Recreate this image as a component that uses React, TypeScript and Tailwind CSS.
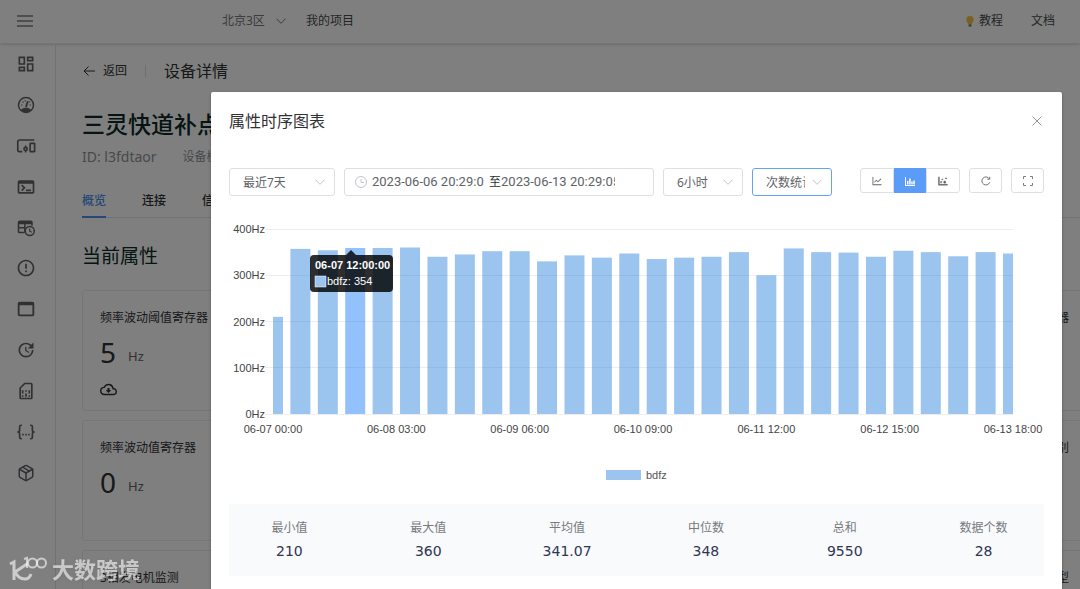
import React from "react";
import {
  MdOutlineDashboard,
  MdOutlineTerminal,
  MdErrorOutline,
  MdWebAsset,
  MdUpdate,
  MdOutlineSimCard,
  MdOutlineCloudDownload,
} from "react-icons/md";
import {
  AiOutlineLineChart,
  AiOutlineDotChart,
} from "react-icons/ai";
import { Package } from "lucide-react";

const GaugeIcon = () => (
  <svg viewBox="0 0 24 24" className="size-[18px]" fill="none" stroke="currentColor" strokeWidth="2">
    <circle cx="12" cy="12" r="10" />
    <path d="M5 18.500c2-2.300 4.400-3 7-3s5 .7 7 3c-2 2-4.400 3-7 3s-5-1-7-3z" fill="currentColor" stroke="none" />
    <path d="M12 14.500L14.500 7" strokeWidth="2.400" />
    <path d="M5.500 12h1.800M16.800 12h1.800M7.500 7.500l1.200 1.200M11 5.500v1.700M17 7.200l-.8 1" strokeWidth="1.600" />
  </svg>
);

const DevicesIcon = () => (
  <svg viewBox="0 0 26 24" className="h-[18px] w-[20px]" fill="none" stroke="currentColor" strokeWidth="2.200">
    <path d="M24 4H4.500Q2 4 2 6.500V17q0 2.500 2 2.500h4" />
    <rect x="18.500" y="8.500" width="6" height="11" rx="0.500" />
    <circle cx="12.500" cy="16" r="2.200" />
    <path d="M11.500 12.500h2M11.500 19.500h2" />
  </svg>
);

const TableClockIcon = () => (
  <svg viewBox="0 0 24 24" className="size-[18px]" fill="none" stroke="currentColor" strokeWidth="2">
    <path d="M10 18H3.500Q2 18 2 16.500V4.500Q2 3 3.500 3h15Q20 3 20 4.500V9M2 11.500h9M10.500 6v12" />
    <path d="M2 3h18v4H2z" fill="currentColor" stroke="none" />
    <circle cx="17" cy="16" r="6" />
    <path d="M17 12.500V16.300l2.600 1.500" strokeWidth="1.600" />
  </svg>
);

const BracesIcon = () => (
  <svg viewBox="0 0 26 24" className="h-[18px] w-[20px]" fill="none" stroke="currentColor" strokeWidth="2.200">
    <path d="M7.500 3H6.500Q4.500 3 4.500 5V9.500Q4.500 12 1.500 12Q4.500 12 4.500 14.500V19Q4.500 21 6.500 21H7.500" />
    <path d="M18.500 3H19.500Q21.500 3 21.500 5V9.500Q21.500 12 24.500 12Q21.500 12 21.500 14.500V19Q21.500 21 19.500 21H18.500" />
    <path d="M8 15.500h2M12 15.500h2M16 15.500h2" />
  </svg>
);

const BarsIcon = () => (
  <svg viewBox="0 0 10 10" className="size-[10px]" fill="currentColor">
    <path d="M0 1h1v8h9v1H0zM2 5h1.500v3.500H2zM4.200 2.500h1.500v6H4.200zM6.300 5.500h1.400v3H6.300zM8.300 4.500h1.500v4H8.300z" />
  </svg>
);

const Chevron = ({ className = "" }: { className?: string }) => (
  <svg viewBox="0 0 10 10" className={`size-[10px] ${className}`} fill="none" stroke="currentColor">
    <path d="M0.500 2.700L5 7.300L9.500 2.700" />
  </svg>
);

const NAV = [
  { label: "仪表盘", icon: <MdOutlineDashboard size={20} /> },
  { label: "监控", icon: <GaugeIcon /> },
  { label: "设备", icon: <DevicesIcon /> },
  { label: "终端", icon: <MdOutlineTerminal size={20} /> },
  { label: "定时", icon: <TableClockIcon /> },
  { label: "告警", icon: <MdErrorOutline size={20} /> },
  { label: "应用", icon: <MdWebAsset size={22} /> },
  { label: "更新", icon: <MdUpdate size={20} /> },
  { label: "流量卡", icon: <MdOutlineSimCard size={20} /> },
  { label: "接口", icon: <BracesIcon /> },
  { label: "产品", icon: <Package size={18} /> },
];

interface CardData {
  title: string;
  value?: string;
  unit?: string;
  cloud?: boolean;
}

const CARDS: CardData[] = [
  { title: "频率波动阈值寄存器", value: "5", unit: "Hz", cloud: true },
  { title: "电压波动寄存器" },
  { title: "电流波动寄存器" },
  { title: "电压波动阈值寄存器" },
  { title: "频率波动值寄存器", value: "0", unit: "Hz" },
  { title: "功率寄存器" },
  { title: "相位寄存器" },
  { title: "市电油机供电类识别" },
  { title: "3相发电机监测" },
  { title: "单相监测" },
  { title: "发电机状态" },
  { title: "发电机组设备的类型" },
];

const VALUES = [
  210, 357, 354, 359, 359, 360, 340, 345, 352, 352, 330, 343, 338, 347, 335,
  338, 340, 350, 300, 358, 350, 349, 340, 353, 350, 341, 350, 347,
];

const TICKS = [
  "06-07 00:00",
  "06-08 03:00",
  "06-09 06:00",
  "06-10 09:00",
  "06-11 12:00",
  "06-12 15:00",
  "06-13 18:00",
];

const STATS = [
  ["最小值", "210"],
  ["最大值", "360"],
  ["平均值", "341.07"],
  ["中位数", "348"],
  ["总和", "9550"],
  ["数据个数", "28"],
];

const LEFT = 44;
const RIGHT = 784;
const BASE = 200;
const STEP = (RIGHT - LEFT) / (VALUES.length - 1);
const toY = (v: number) => BASE - (v * 185) / 400;

const Chart: React.FC = () => (
  <svg viewBox="0 0 815 276" className="mt-[18px] block w-full font-['Liberation_Sans',Arial,sans-serif] text-[11px]" role="img" aria-label="bdfz">
    {VALUES.map((v, i) => {
      const x = LEFT + i * STEP;
      const x1 = Math.max(LEFT, x - 10);
      const x2 = Math.min(RIGHT, x + 10);
      return (
        <rect key={i} x={x1} y={toY(v)} width={x2 - x1} height={BASE - toY(v)} fill={i === 3 ? "#92c1fb" : "#9bc5ef"} />
      );
    })}
    {[0, 100, 200, 300, 400].map((v) => (
      <g key={v}>
        <rect x="36" y={Math.floor(toY(v))} width={RIGHT - 36} height="1" fill="#3c6496" fillOpacity="0.100" />
        <text x="36" y={toY(v) + 4} textAnchor="end" fill="#444">
          {v}Hz
        </text>
      </g>
    ))}
    {TICKS.map((t, i) => (
      <text key={t} x={LEFT + (i * (RIGHT - LEFT)) / 6} y="219" textAnchor="middle" fill="#444">
        {t}
      </text>
    ))}

    {/* Legend */}
    <rect x="377" y="256" width="35" height="10" fill="#9bc5ef" />
    <text x="417" y="265" fill="#555">
      bdfz
    </text>

    {/* Tooltip */}
    <g>
      <path d="M85 41H117L122 36L127 41H160Q164 41 164 45V74Q164 78 160 78H85Q81 78 81 74V45Q81 41 85 41Z" fill="#000" fillOpacity="0.820" />
      <text x="86" y="55" fill="#fff" className="font-bold">
        06-07 12:00:00
      </text>
      <rect x="86" y="62" width="11" height="11" fill="#9bc5ef" stroke="#fff" strokeWidth="0.500" />
      <text x="98" y="71" fill="#fff">
        bdfz: 354
      </text>
    </g>
  </svg>
);

interface PickerProps {
  label: string;
  options: string[];
  width: string;
  active?: boolean;
}

const Picker: React.FC<PickerProps> = ({ label, options, width, active }) => (
  <div className={`relative shrink-0 ${width}`}>
    <select
      aria-label={label}
      className={`h-7 w-full appearance-none rounded-[3px] border bg-white pl-[13px] pr-[26px] pt-px text-[12px] text-[#606266] outline-none ${
        active ? "border-[#66a3ee]" : "border-[#dcdfe6]"
      }`}
    >
      {options.map((o) => (
        <option key={o}>{o}</option>
      ))}
    </select>
    <Chevron className="pointer-events-none absolute right-[10px] top-[9px] text-[#c0c4cc]" />
  </div>
);

const Header: React.FC = () => (
  <header className="flex h-11 items-center border-b border-[#e9e9eb] px-4 pb-px text-[12px] text-[#4a4b4e] shadow-sm">
    <button aria-label="菜单" className="flex w-[206px] shrink-0">
      <svg viewBox="0 0 18 14" className="h-[14px] w-[18px] text-[#808080]" stroke="currentColor" strokeWidth="1.300">
        <path d="M1 2h16M1 7h16M1 12h16" />
      </svg>
    </button>
    <button className="flex items-center gap-[11px] text-[#77787b]">
      北京3区
      <Chevron />
    </button>
    <a href="#projects" className="ml-5">
      我的项目
    </a>
    <a href="#guide" className="ml-auto flex items-center gap-1">
      <svg viewBox="0 0 10 14" className="h-[13px] w-[10px]">
        <path d="M5 1a4 4 0 0 0-4 4c0 2 1.600 2.600 2 5h4c.4-2.400 2-3 2-5a4 4 0 0 0-4-4z" fill="#f2c341" />
        <path d="M3.500 10h3v2.500h-3z" fill="#777" />
      </svg>
      教程
    </a>
    <a href="#docs" className="ml-7 mr-[9px]">
      文档
    </a>
  </header>
);

const DeviceCard: React.FC<CardData> = ({ title, value, unit, cloud }) => (
  <div className="h-[121px] rounded-[3px] border border-[#e9edf3] px-[17px] pt-[17px] text-[#303133]">
    <h3 className="text-[12px] leading-5">{title}</h3>
    {value && (
      <p className="mt-[6px] flex items-center gap-3 leading-9">
        <span className="text-[28px]">{value}</span>
        <span className="pt-2 text-[13px] leading-7 text-[#606266]">{unit}</span>
      </p>
    )}
    {cloud && <MdOutlineCloudDownload size={17} className="mt-[11px]" />}
  </div>
);

const DetailPage: React.FC = () => (
  <main className="min-w-0 flex-1 overflow-hidden pl-[26px]">
    <div className="flex h-[54px] items-center text-[#303133]">
      <a href="#back" className="flex items-center gap-[7px] text-[12px]">
        <svg viewBox="0 0 14 12" className="h-3 w-[14px]" fill="none" stroke="currentColor">
          <path d="M13 6H2M6.500 1.500L2 6l4.500 4.500" />
        </svg>
        返回
      </a>
      <span className="mx-[18px] h-3 w-px bg-[#dcdfe6]" />
      <span className="text-[16px]">设备详情</span>
    </div>
    <h1 className="flex h-[52px] items-center whitespace-nowrap text-[23px] font-medium text-[#0b2a26]">
      三灵快道补点
    </h1>
    <div className="flex gap-[26px] text-[14px] leading-[14px] text-[#909399]">
      <span>ID: l3fdtaor</span>
      <span className="text-[12px]">设备模板</span>
    </div>
    <nav className="mt-5 flex h-[34px] gap-9 border-b border-[#dfe4ed] text-[12px] font-medium text-[#303133]">
      <a href="#overview" className="-mb-px flex items-center border-b-2 border-[#4a90f0] pt-[2px] text-[#4a90f0]">
        概览
      </a>
      <a href="#connect" className="flex items-center pt-px">连接</a>
      <a href="#info" className="flex items-center pt-px">信息</a>
    </nav>
    <h2 className="flex h-[72px] items-center pt-1 text-[19px] text-[#0b2a26]">当前属性</h2>
    <div className="grid grid-cols-[repeat(4,277px)] gap-x-[10px] gap-y-[9px]">
      {CARDS.map((c) => (
        <DeviceCard key={c.title} {...c} />
      ))}
    </div>
  </main>
);

const ChartDialog: React.FC = () => (
  <section
    role="dialog"
    aria-label="属性时序图表"
    className="min-h-full rounded-t-[2px] bg-white px-[18px] shadow-[0_1px_3px_rgba(0,0,0,0.3)]"
  >
    <div className="flex h-[58px] items-center justify-between">
      <h2 className="text-[16px] text-[#303133]">属性时序图表</h2>
      <button aria-label="关闭" className="mr-[2px] text-[#909399]">
        <svg viewBox="0 0 10 10" className="size-[10px]" stroke="currentColor">
          <path d="M0.500 0.500l9 9M9.500 0.500l-9 9" />
        </svg>
      </button>
    </div>

    {/* Filters */}
    <div className="mt-[18px] flex items-start gap-[9px]">
      <Picker label="时间范围" options={["最近7天"]} width="w-[106px]" />
      <div className="flex h-7 min-w-0 flex-1 items-center rounded-[3px] border border-[#dcdfe6] pl-[10px] font-[Roboto,'Noto_Sans_CJK_SC',sans-serif] text-[13px] text-[#606266]">
        <svg viewBox="0 0 12 12" className="mr-[5px] size-3 shrink-0 text-[#c0c4cc]" fill="none" stroke="currentColor">
          <circle cx="6" cy="6" r="5.500" />
          <path d="M6 3v3.500h3" />
        </svg>
        <input aria-label="开始时间" defaultValue="2023-06-06 20:29:05" className="w-28 outline-none" />
        <span className="ml-[5px] shrink-0 text-[12px] text-[#303133]">至</span>
        <input aria-label="结束时间" defaultValue="2023-06-13 20:29:05" className="w-[114px] outline-none" />
      </div>
      <Picker label="间隔" options={["6小时"]} width="w-20" />
      <Picker label="统计方式" options={["次数统计"]} width="w-20" active />
      <div className="ml-[19px] flex h-[25px] w-[100px] shrink-0 text-[#606266]">
        <button aria-label="折线图" className="flex flex-1 items-center justify-center rounded-l-[3px] border border-[#dcdfe6]">
          <AiOutlineLineChart size={12} />
        </button>
        <button aria-label="柱状图" className="flex flex-1 items-center justify-center bg-[#5b9cf8] text-white">
          <BarsIcon />
        </button>
        <button aria-label="散点图" className="flex flex-1 items-center justify-center rounded-r-[3px] border border-[#dcdfe6]">
          <AiOutlineDotChart size={12} strokeWidth={40} />
        </button>
      </div>
      <button aria-label="刷新" className="flex h-[25px] w-[33px] shrink-0 items-center justify-center rounded-[3px] border border-[#dcdfe6] text-[#606266]">
        <svg viewBox="0 0 10 10" className="size-[10px]" fill="none" stroke="currentColor" strokeWidth="0.900">
          <path d="M8.700 6.300A4 4 0 1 1 8.300 2.800M8.700 0.800V3.200H6.300" />
        </svg>
      </button>
      <button aria-label="全屏" className="flex h-[25px] w-[33px] shrink-0 items-center justify-center rounded-[3px] border border-[#dcdfe6] text-[#7b7d82]">
        <svg viewBox="0 0 10 10" className="size-[10px]" fill="none" stroke="currentColor">
          <path d="M0.500 3V0.500H3M7 0.500h2.500V3M9.500 7v2.500H7M3 9.500H0.500V7" />
        </svg>
      </button>
    </div>

    <Chart />

    {/* Summary */}
    <div className="mt-[14px] h-[72px] bg-[#f8fafc]">
      <dl className="-mx-[9px] grid grid-cols-6 pt-3 text-center">
        {STATS.map(([label, value]) => (
          <div key={label}>
            <dt className="text-[12px] leading-6 text-[#77797d]">{label}</dt>
            <dd className="font-['DejaVu_Sans',sans-serif] text-[14px] leading-[22px] text-[#303550]">{value}</dd>
          </div>
        ))}
      </dl>
    </div>
  </section>
);

const Watermark: React.FC = () => (
  <div className="pointer-events-none absolute bottom-[6px] left-[9px] flex items-center gap-[5px] text-white/60">
    <svg viewBox="0 0 38 28" className="h-7 w-[38px]" fill="none" stroke="currentColor" strokeWidth="3">
      <path d="M1 9l4-2v18M18 9L6 17M6 16c2 6 5 8 10 8 3 0 5-2 6-5" />
      <path d="M15 4l3-1v10" strokeWidth="2" />
      <circle cx="23.500" cy="8" r="4.500" strokeWidth="2" />
      <circle cx="32.500" cy="8" r="4.500" strokeWidth="2" />
    </svg>
    <span className="text-[22px] font-bold leading-7 drop-shadow">大数跨境</span>
  </div>
);

const App: React.FC = () => {
  return (
    <div className="relative h-screen overflow-hidden bg-white font-['Noto_Sans','Noto_Sans_CJK_SC',sans-serif]">
      <Header />
      <div className="flex">
        <aside className="w-14 shrink-0 border-r border-[#dfe4f0]">
          <nav className="grid h-[449px] grid-rows-11 pr-1">
            {NAV.map((n) => (
              <a key={n.label} href="#" aria-label={n.label} className="flex items-center justify-center text-[#606266]">
                {n.icon}
              </a>
            ))}
          </nav>
        </aside>
        <DetailPage />
      </div>

      <div className="absolute inset-0 bg-black/50 pl-[211px] pr-[18px] pt-[92px]">
        <ChartDialog />
      </div>
      <Watermark />
    </div>
  );
};

export default App;
